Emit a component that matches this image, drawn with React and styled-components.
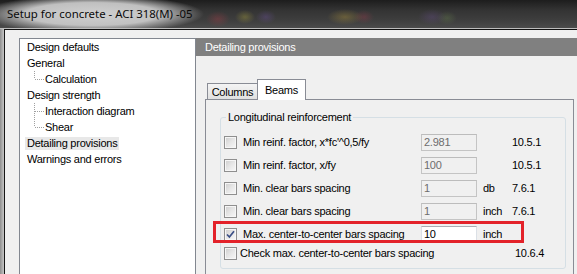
import React from 'react';
import styled, { createGlobalStyle } from 'styled-components';

const Global = createGlobalStyle`
  html, body { margin: 0; padding: 0; background: #f0f0f0; }
  body { font-family: "Liberation Sans", Arial, sans-serif; }
`;

const Window = styled.div`
  width: 577px;
  height: 274px;
  overflow: hidden;
  display: flex;
  flex-direction: column;
  background: #f0f0f0;
`;

const TitleBar = styled.div`
  height: 29px;
  flex: none;
  box-sizing: border-box;
  display: flex;
  align-items: center;
  padding: 0 0 1px 7px;
  border-bottom: 1px solid #bdbdbd;
  font-family: "Noto Sans", "Open Sans", sans-serif;
  font-size: 11.4px;
  color: #0a0a0a;
  background:
    radial-gradient(ellipse 112px 19px at 92px 14px, rgba(208,208,208,1) 0%, rgba(200,200,200,0.95) 60%, rgba(190,190,190,0) 100%),
    radial-gradient(ellipse 12px 8px at 218px 19px, rgba(170,60,70,0.35), rgba(0,0,0,0) 100%),
    radial-gradient(ellipse 10px 7px at 245px 17px, rgba(180,170,60,0.35), rgba(0,0,0,0) 100%),
    radial-gradient(ellipse 10px 7px at 266px 17px, rgba(110,80,160,0.35), rgba(0,0,0,0) 100%),
    radial-gradient(ellipse 18px 8px at 345px 17px, rgba(190,160,60,0.35), rgba(0,0,0,0) 100%),
    radial-gradient(ellipse 10px 7px at 364px 17px, rgba(170,60,80,0.3), rgba(0,0,0,0) 100%),
    radial-gradient(ellipse 14px 8px at 432px 17px, rgba(110,80,150,0.3), rgba(0,0,0,0) 100%),
    radial-gradient(ellipse 10px 7px at 447px 18px, rgba(110,140,80,0.3), rgba(0,0,0,0) 100%),
    linear-gradient(#1d1d1d, #333 35%, #3f3f3f 75%, #4b4b4b);
`;

const Frame = styled.div`
  flex: 1;
  display: flex;
  min-height: 0;
`;

const LeftEdge = styled.div`
  width: 4px;
  flex: none;
  background: linear-gradient(to right, #8e8e8e, #c6c6c6);
`;

const Body = styled.div`
  flex: 1;
  display: flex;
  border-left: 1px solid #161616;
  border-top: 1px solid #111;
  padding: 8px 0 0 14px;
  overflow: hidden;
  font-size: 11px;
  letter-spacing: -0.25px;
  color: #000;
`;

const Tree = styled.div`
  width: 177px;
  height: 400px;
  flex: none;
  box-sizing: border-box;
  border: 1px solid #828790;
  background: #fff;
  padding-left: 7px;
`;

const TreeRow = styled.div`
  height: 16px;
  display: flex;
  align-items: center;
  padding-left: ${p => (p.$child ? 6 : 0)}px;
`;

const TreeLabel = styled.span`
  line-height: 13px;
  padding: 0 2px;
  margin-left: -2px;
  background: ${p => (p.$selected ? '#e8e8e8' : 'transparent')};
`;

const Pane = styled.div`
  flex: 1;
  display: flex;
  flex-direction: column;
  min-width: 0;
`;

const PaneHeader = styled.div`
  height: 18px;
  flex: none;
  display: flex;
  align-items: center;
  padding-left: 9px;
  background: #808080;
  color: #fff;
`;

const TabArea = styled.div`
  padding: 23px 3px 0 9px;
  display: flex;
  flex-direction: column;
`;

const TabStrip = styled.div`
  display: flex;
  align-items: flex-end;
  padding-left: 2px;
  height: 21px;
  margin-bottom: -1px;
  position: relative;
  z-index: 1;
`;

const Tab = styled.div`
  box-sizing: border-box;
  display: flex;
  align-items: center;
  justify-content: center;
  border: 1px solid #898c95;
  border-bottom: none;
  width: ${p => (p.$active ? 49 : 51)}px;
  height: ${p => (p.$active ? 21 : 16)}px;
  margin-bottom: ${p => (p.$active ? 0 : 1)}px;
  margin-left: ${p => (p.$active ? -1 : 0)}px;
  background: ${p => (p.$active ? '#fff' : 'linear-gradient(#f4f4f4, #e0e0e0)')};
  padding-top: ${p => (p.$active ? 0 : 1)}px;
`;

const TabPanel = styled.div`
  box-sizing: border-box;
  height: 300px;
  border: 1px solid #898c95;
  background: #f0f0f0;
  padding: 10px 7px 0 14px;
`;

const Group = styled.fieldset`
  margin: 0;
  min-width: 0;
  border: 1px solid #d5dfe5;
  border-radius: 3px;
  padding: 0 0 4px 3px;
`;

const Legend = styled.legend`
  padding: 0 2px;
  margin-left: 2px;
  line-height: 14px;
`;

const Row = styled.div`
  position: relative;
  display: grid;
  grid-template-columns: 13px 184px 56px 35px 1fr;
  align-items: center;
  height: 22px;
  margin-top: ${p => p.$mt}px;

  ${p =>
    p.$highlight &&
    `&::after {
      content: "";
      position: absolute;
      left: -11px;
      top: -2px;
      width: 311px;
      height: 22px;
      box-sizing: border-box;
      border: 3px solid #e3222a;
      pointer-events: none;
    }`}
`;

const Label = styled.span`
  padding-left: ${p => p.$pad ?? 6}px;
  white-space: nowrap;
  grid-column: ${p => (p.$wide ? '2 / 5' : 'auto')};
`;

const Unit = styled.span`
  padding-left: 6px;
`;

const Ref = styled.span`
  padding-left: ${p => p.$pad ?? 0}px;
`;

const Box = styled.div`
  box-sizing: border-box;
  width: 13px;
  height: 13px;
  border: 1px solid #8f8f8f;
  background: linear-gradient(135deg, #cdcdcd 0%, #e6e6e6 50%, #f8f8f8 100%);
  box-shadow: inset 0 0 0 1px #f6f6f6;
  display: flex;
  align-items: center;
  justify-content: center;
`;

const InputBox = styled.div`
  box-sizing: border-box;
  width: 56px;
  height: 17px;
  display: flex;
  align-items: center;
  padding-left: 2px;
  border: 1px solid ${p => (p.$enabled ? '#dbe0e6' : '#c4c4c4')};
  border-top-color: ${p => (p.$enabled ? '#abadb3' : '#bcbcbc')};
  background: ${p => (p.$enabled ? '#fff' : '#f0f0f0')};
  color: ${p => (p.$enabled ? '#000' : '#6d6d6d')};
`;

const Connector = ({ last }) => (
  <svg width="12" height="16" viewBox="0 0 12 16" style={{ flex: 'none' }}>
    <line x1="1.5" y1="0" x2="1.5" y2={last ? 8 : 16} stroke="#a0a0a0" strokeDasharray="1 1" shapeRendering="crispEdges" />
    <line x1="2" y1="8.5" x2="11" y2="8.5" stroke="#a0a0a0" strokeDasharray="1 1" shapeRendering="crispEdges" />
  </svg>
);

const CheckBox = ({ checked }) => (
  <Box>
    {checked && (
      <svg width="9" height="9" viewBox="0 0 9 9">
        <path d="M1 4.5 L3.4 7 L8 1.2" fill="none" stroke="#3b4f86" strokeWidth="1.7" />
      </svg>
    )}
  </Box>
);

const treeItems = [
  { label: 'Design defaults' },
  { label: 'General' },
  { label: 'Calculation', child: true, last: true },
  { label: 'Design strength' },
  { label: 'Interaction diagram', child: true },
  { label: 'Shear', child: true, last: true },
  { label: 'Detailing provisions', selected: true },
  { label: 'Warnings and errors' },
];

const rows = [
  { label: "Min reinf. factor, x*fc'^0,5/fy", value: '2.981', ref: '10.5.1', mt: 7 },
  { label: 'Min reinf. factor, x/fy', value: '100', ref: '10.5.1', mt: 1 },
  { label: 'Min. clear bars spacing', value: '1', unit: 'db', ref: '7.6.1', mt: 1 },
  { label: 'Min. clear bars spacing', value: '1', unit: 'inch', ref: '7.6.1', mt: 1 },
  { label: 'Max. center-to-center bars spacing', value: '10', unit: 'inch', checked: true, enabled: true, highlight: true, mt: 1 },
];

export default function App() {
  return (
    <>
      <Global />
      <Window>
        <TitleBar>Setup for concrete - ACI 318(M) -05</TitleBar>
        <Frame>
          <LeftEdge />
          <Body>
            <Tree>
              {treeItems.map((it, i) => (
                <TreeRow key={i} $child={it.child}>
                  {it.child && <Connector last={it.last} />}
                  <TreeLabel $selected={it.selected}>{it.label}</TreeLabel>
                </TreeRow>
              ))}
            </Tree>
            <Pane>
              <PaneHeader>Detailing provisions</PaneHeader>
              <TabArea>
                <TabStrip>
                  <Tab>Columns</Tab>
                  <Tab $active>Beams</Tab>
                </TabStrip>
                <TabPanel>
                  <Group>
                    <Legend>Longitudinal reinforcement</Legend>
                    {rows.map((r, i) => (
                      <Row key={i} $mt={r.mt} $highlight={r.highlight}>
                        <CheckBox checked={r.checked} />
                        <Label>{r.label}</Label>
                        <InputBox $enabled={r.enabled}>{r.value}</InputBox>
                        <Unit>{r.unit || ''}</Unit>
                        <Ref>{r.ref || ''}</Ref>
                      </Row>
                    ))}
                    <Row $mt={-3}>
                      <CheckBox />
                      <Label $wide $pad={3}>Check max. center-to-center bars spacing</Label>
                      <Ref $pad={3}>10.6.4</Ref>
                    </Row>
                  </Group>
                </TabPanel>
              </TabArea>
            </Pane>
          </Body>
        </Frame>
      </Window>
    </>
  );
}
